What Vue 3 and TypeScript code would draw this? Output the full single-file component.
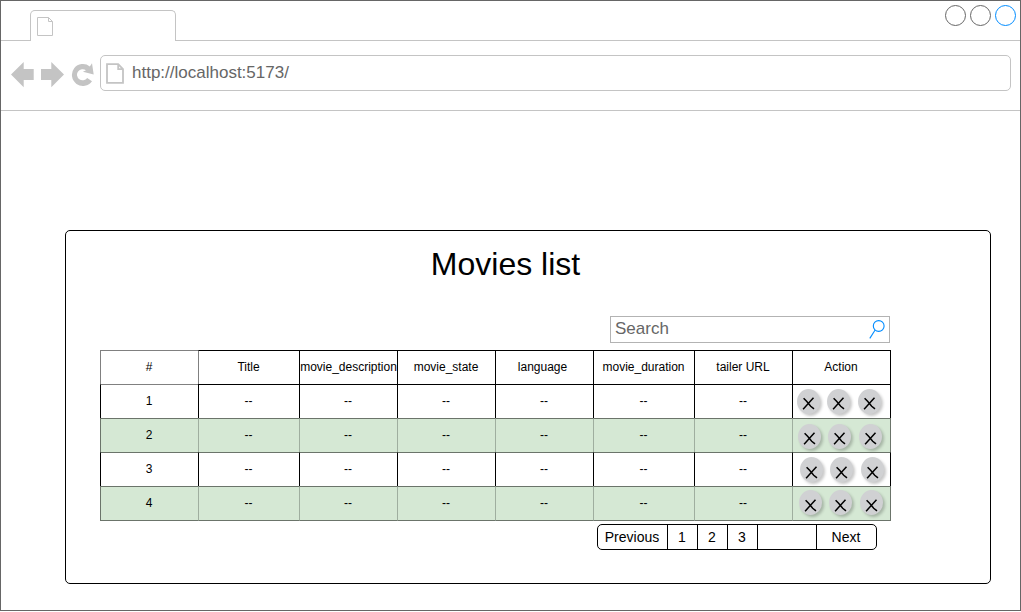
<script setup lang="ts">
interface MovieRow {
  id: number
  cells: string[]
}

const headers: string[] = [
  '#', 'Title', 'movie_description', 'movie_state',
  'language', 'movie_duration', 'tailer URL', 'Action',
]

const rows: MovieRow[] = [1, 2, 3, 4].map((id) => ({
  id,
  cells: Array.from({ length: 6 }, () => '--'),
}))

const pages: string[] = ['Previous', '1', '2', '3', '', 'Next']
</script>

<template>
  <div class="window">
    <div class="tab-strip">
      <div class="strip-start"></div>
      <div class="tab">
        <svg class="tab-icon" width="17" height="20" viewBox="0 0 17 20">
          <path d="M.5 .5H11.5L15.5 4.5V18.5H.5ZM11.5 .5V4.5H15.5" />
        </svg>
      </div>
      <div class="strip-end">
        <svg width="72" height="22" viewBox="0 0 72 22" class="controls">
          <circle cx="10.5" cy="10.5" r="10" />
          <circle cx="35.5" cy="10.5" r="10" />
          <circle cx="60.5" cy="10.5" r="10" class="blue" />
        </svg>
      </div>
    </div>

    <div class="toolbar">
      <svg class="nav" width="86" height="28" viewBox="10 60 86 28">
        <path d="M11 74.5 23.7 62V69H33.7V80H23.7V87.3Z" />
        <path d="M64 74.5 51.3 62V69H41V80H51.3V87.3Z" />
        <path d="M92 63.3 89.8 66.4A11 11 0 1 0 92 81.2L87.2 77.9A5.6 5.6 0 1 1 86 70.3L82.9 71.8 93.7 74.4Z" />
      </svg>
      <div class="address">
        <svg class="page-icon" width="19" height="22" viewBox="0 0 19 22">
          <path d="M1 1.1H12.2L17 6.1V19.8H1ZM12.2 1.1V6.1H17" />
        </svg>
        <span>http://localhost:5173/</span>
      </div>
    </div>

    <main class="card">
      <h1>Movies list</h1>
      <div class="search">
        <span>Search</span>
        <svg width="18" height="22" viewBox="869 318 18 22">
          <circle cx="879.7" cy="326" r="5.4" />
          <path d="M876 330.2 870.8 338.4" />
        </svg>
      </div>

      <div class="table">
        <div class="row head">
          <div v-for="h in headers" :key="h" class="cell" :class="h">{{ h }}</div>
        </div>
        <div v-for="row in rows" :key="row.id" class="row" :class="['row-' + row.id, { green: row.id % 2 === 0 }]">
          <div class="cell">{{ row.id }}</div>
          <div v-for="(c, i) in row.cells" :key="i" class="cell">{{ c }}</div>
          <div class="cell actions">
            <span v-for="n in 3" :key="n" class="action">
              <svg width="13" height="13" viewBox="0 0 13 13">
                <path d="M1.6 1.2 4.6 4.3 8.7 9.3 12 11.9M11.5 .8 6.7 6 1.1 12.2" />
              </svg>
            </span>
          </div>
        </div>
      </div>

      <div class="pager">
        <span v-for="(p, i) in pages" :key="i">{{ p }}</span>
      </div>
    </main>
  </div>
</template>

<style>
html,
body {
  margin: 0;
  background: #fff;
  overflow: hidden;
}
</style>

<style scoped>
* {
  box-sizing: border-box;
}
.window {
  width: 1021px;
  height: 611px;
  border: 1px solid #666;
  background: #fff;
  font-family: "Liberation Sans", Arial, sans-serif;
  color: #000;
}
svg {
  display: block;
  flex: none;
}
.tab-strip {
  display: flex;
  height: 40px;
}
.strip-start {
  width: 29px;
  border-bottom: 1px solid #c4c4c4;
}
.tab {
  width: 146px;
  height: 31px;
  margin-top: 9px;
  padding: 6px 0 0 6px;
  border: 1px solid #c4c4c4;
  border-bottom: 0;
  border-radius: 5px 5px 0 0;
}
.tab-icon path {
  fill: none;
  stroke: #c4c4c4;
}
.strip-end {
  flex: 1;
  display: flex;
  justify-content: flex-end;
  padding: 4px 4px 0 0;
  border-bottom: 1px solid #c4c4c4;
}
.controls {
  margin-right: -1px;
}
.controls circle {
  fill: none;
  stroke: #666;
}
.controls .blue {
  stroke: #008cff;
}
.toolbar {
  display: flex;
  height: 70px;
  padding: 14px 9px 0;
  border-bottom: 1px solid #c4c4c4;
}
.nav {
  margin: 5px 4px 0 0;
  fill: #c4c4c4;
}
.address {
  display: flex;
  flex: 1;
  height: 36px;
  padding: 7px 0 0 5px;
  border: 1px solid #c4c4c4;
  border-radius: 5px;
  color: #666;
  font-size: 17px;
  line-height: 20px;
}
.address span {
  margin-left: 7px;
}
.page-icon path {
  fill: none;
  stroke: #c4c4c4;
  stroke-width: 1.8;
}
.card {
  display: flex;
  flex-direction: column;
  width: 926px;
  height: 354px;
  margin: 119px 0 0 64px;
  border: 1px solid #000;
  border-radius: 5px;
}
h1 {
  width: 879px;
  height: 36px;
  margin: 15px 0 0;
  font-size: 32px;
  font-weight: 400;
  line-height: 36px;
  text-align: center;
}
.search {
  display: flex;
  justify-content: space-between;
  width: 280px;
  height: 27px;
  margin: 34px 0 0 544px;
  padding: 1px 3px 0 4px;
  border: 1px solid #b3b3b3;
  color: #666;
  font-size: 17px;
  line-height: 22px;
}
.search circle,
.search path {
  fill: none;
  stroke: #008cff;
  stroke-width: 1.1;
}
.table {
  width: 791px;
  margin: 7px 0 0 34px;
  font-size: 12px;
}
.row {
  display: grid;
  grid-template-columns: 98px 101px 98px 98px 98px 101px 98px 99px;
  height: 34px;
}
.cell {
  display: flex;
  align-items: center;
  justify-content: center;
  padding: 0 1px 2px 0;
  border-top: 1px solid #000;
  border-left: 1px solid #000;
  white-space: nowrap;
}
.cell.language {
  padding-right: 4px;
}
.cell.movie_description {
  padding-right: 0;
}
.cell:last-child {
  border-right: 1px solid #000;
}
.head .cell:first-child,
.row-1 .cell:first-child {
  border-top-color: #808080;
}
.head .cell:first-child,
.head .cell:nth-child(2) {
  border-left-color: #808080;
}
.green .cell {
  background: #d5e8d4;
  border-color: #6b746a #6b746a #6b746a #9fae9f;
}
.green .cell:first-child {
  border-left-color: #6b746a;
}
.row-3 .cell {
  border-top-color: #6b746a;
}
.row-4 {
  height: 35px;
}
.row-4 .cell {
  border-bottom: 1px solid #6b746a;
}
.cell.actions {
  justify-content: flex-start;
  align-items: flex-start;
  gap: 7px;
  padding: 4px 0 0 4px;
}
.row-2 .cell.actions {
  padding: 5px 0 0 5px;
}
.row-3 .cell.actions {
  padding: 4px 0 0 7px;
}
.row-4 .cell.actions {
  padding: 3px 0 0 6px;
}
.action {
  flex: none;
  width: 23px;
  height: 25px;
  padding: 9px 0 0 5px;
  border-radius: 50%;
  background: #d0d1d3;
  box-shadow: 2px 2px 3px rgba(0, 0, 0, 0.22);
}
.row-1 .action,
.row-2 .action {
  padding-top: 8px;
}
.action:last-child {
  margin-left: 1px;
}
.action path {
  fill: none;
  stroke: #000;
  stroke-width: 1.5;
}
.pager {
  display: grid;
  grid-template-columns: 69px 30px 30px 30px 59px 60px;
  width: 280px;
  height: 26px;
  margin: 3px 0 0 531px;
  border: 1px solid #000;
  border-radius: 5px;
  font-size: 14px;
  line-height: 24px;
  text-align: center;
}
.pager span {
  padding-right: 1px;
  white-space: nowrap;
}
.pager span + span {
  border-left: 1px solid #000;
}
</style>
